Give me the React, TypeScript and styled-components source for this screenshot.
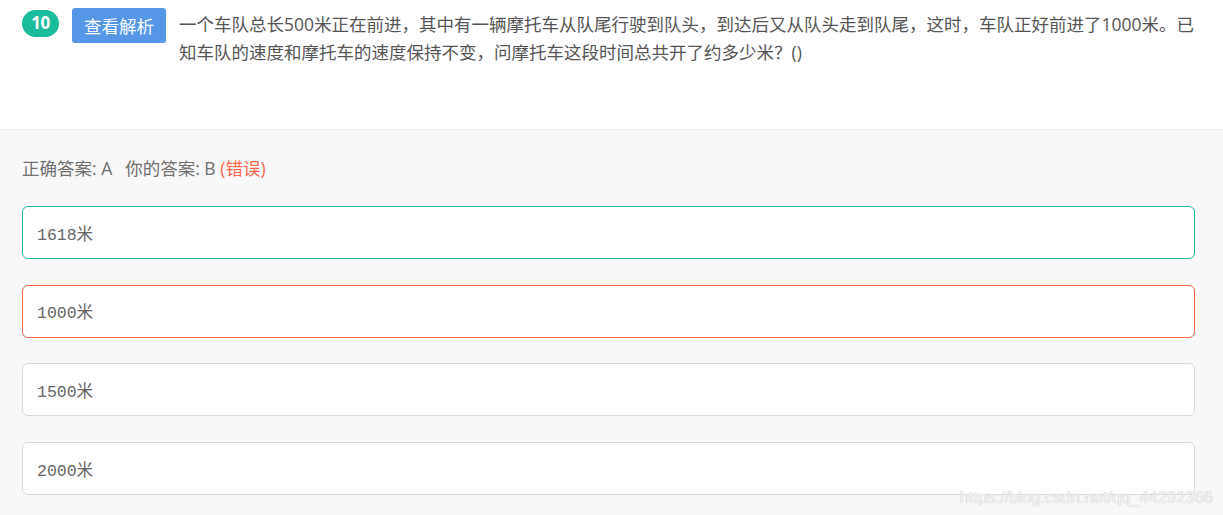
import styled, { createGlobalStyle } from 'styled-components';

const GlobalStyle = createGlobalStyle`
  html, body {
    margin: 0;
    padding: 0;
    background: #f8f8f8;
  }
  body {
    font-family: "Noto Sans CJK SC", "Open Sans", sans-serif;
  }
`;

interface Option {
  id: string;
  text: string;
  state: 'right' | 'wrong' | 'none';
}

const options: Option[] = [
  { id: 'A', text: '1618米', state: 'right' },
  { id: 'B', text: '1000米', state: 'wrong' },
  { id: 'C', text: '1500米', state: 'none' },
  { id: 'D', text: '2000米', state: 'none' },
];

const borderColors = {
  right: '#1abc9c',
  wrong: '#ff6a4b',
  none: '#d9d9d9',
};

const App = () => {
  return (
    <Page>
      <GlobalStyle />
      <Header>
        <Num>10</Num>
        <AnalysisButton>查看解析</AnalysisButton>
        <Question>
          一个车队总长500米正在前进，其中有一辆摩托车从队尾行驶到队头，到达后又从队头走到队尾，这时，车队正好前进了1000米。已知车队的速度和摩托车的速度保持不变，问摩托车这段时间总共开了约多少米？()
        </Question>
      </Header>
      <Body>
        <AnswerLine>
          正确答案: A<Gap />你的答案: B <Wrong>(错误)</Wrong>
        </AnswerLine>
        <OptionList>
          {options.map((o) => (
            <OptionBox key={o.id} $state={o.state}>
              {o.text}
            </OptionBox>
          ))}
        </OptionList>
      </Body>
      <Watermark>https://blog.csdn.net/qq_44292366</Watermark>
    </Page>
  );
};

export default App;

const Page = styled.div`
  position: relative;
  width: 1223px;
  height: 515px;
  overflow: hidden;
  background: #f8f8f8;
`;

const Header = styled.div`
  display: flex;
  align-items: flex-start;
  height: 130px;
  box-sizing: border-box;
  padding: 8px 22px 0 22px;
  background: #fff;
  border-bottom: 1px solid #ebebeb;
`;

const Num = styled.div`
  flex: none;
  margin-top: 2px;
  width: 37px;
  height: 27px;
  border-radius: 14px;
  background: #1abc9c;
  color: #fff;
  font-family: "Open Sans", "Liberation Sans", sans-serif;
  font-weight: 700;
  font-size: 17px;
  line-height: 26px;
  text-align: center;
  letter-spacing: -0.5px;
`;

const AnalysisButton = styled.div`
  flex: none;
  margin-left: 13px;
  width: 94px;
  height: 35px;
  border-radius: 3px;
  background: #5596e6;
  color: #fff;
  font-size: 17.5px;
  line-height: 35px;
  text-align: center;
`;

const Question = styled.div`
  margin-left: 13px;
  margin-top: 2px;
  flex: 1;
  color: #555;
  font-size: 17.5px;
  line-height: 28px;
  font-family: "Open Sans", "Noto Sans CJK SC", sans-serif;
`;

const Body = styled.div`
  padding: 24px 28px 0 22px;
`;

const AnswerLine = styled.div`
  color: #707070;
  font-size: 17.5px;
  line-height: 28px;
  font-family: "Open Sans", "Noto Sans CJK SC", sans-serif;
`;

const Gap = styled.span`
  display: inline-block;
  width: 13px;
`;

const Wrong = styled.span`
  color: #ff6a4b;
`;

const OptionList = styled.div`
  display: flex;
  flex-direction: column;
  gap: 25.7px;
  margin-top: 24px;
`;

const OptionBox = styled.div<{ $state: 'right' | 'wrong' | 'none' }>`
  height: 53px;
  box-sizing: border-box;
  border: 1px solid ${(p) => borderColors[p.$state]};
  border-radius: 6px;
  background: #fff;
  padding-left: 14px;
  display: flex;
  align-items: center;
  color: #666;
  font-size: 16.5px;
  font-family: "Liberation Mono", "Noto Sans CJK SC", monospace;
`;

const Watermark = styled.div`
  position: absolute;
  right: 10px;
  bottom: 8px;
  color: rgba(255, 255, 255, 0.85);
  font-family: "Liberation Sans", sans-serif;
  font-size: 16.5px;
  text-shadow: 0 0 1px #aaa;
  pointer-events: none;
`;
